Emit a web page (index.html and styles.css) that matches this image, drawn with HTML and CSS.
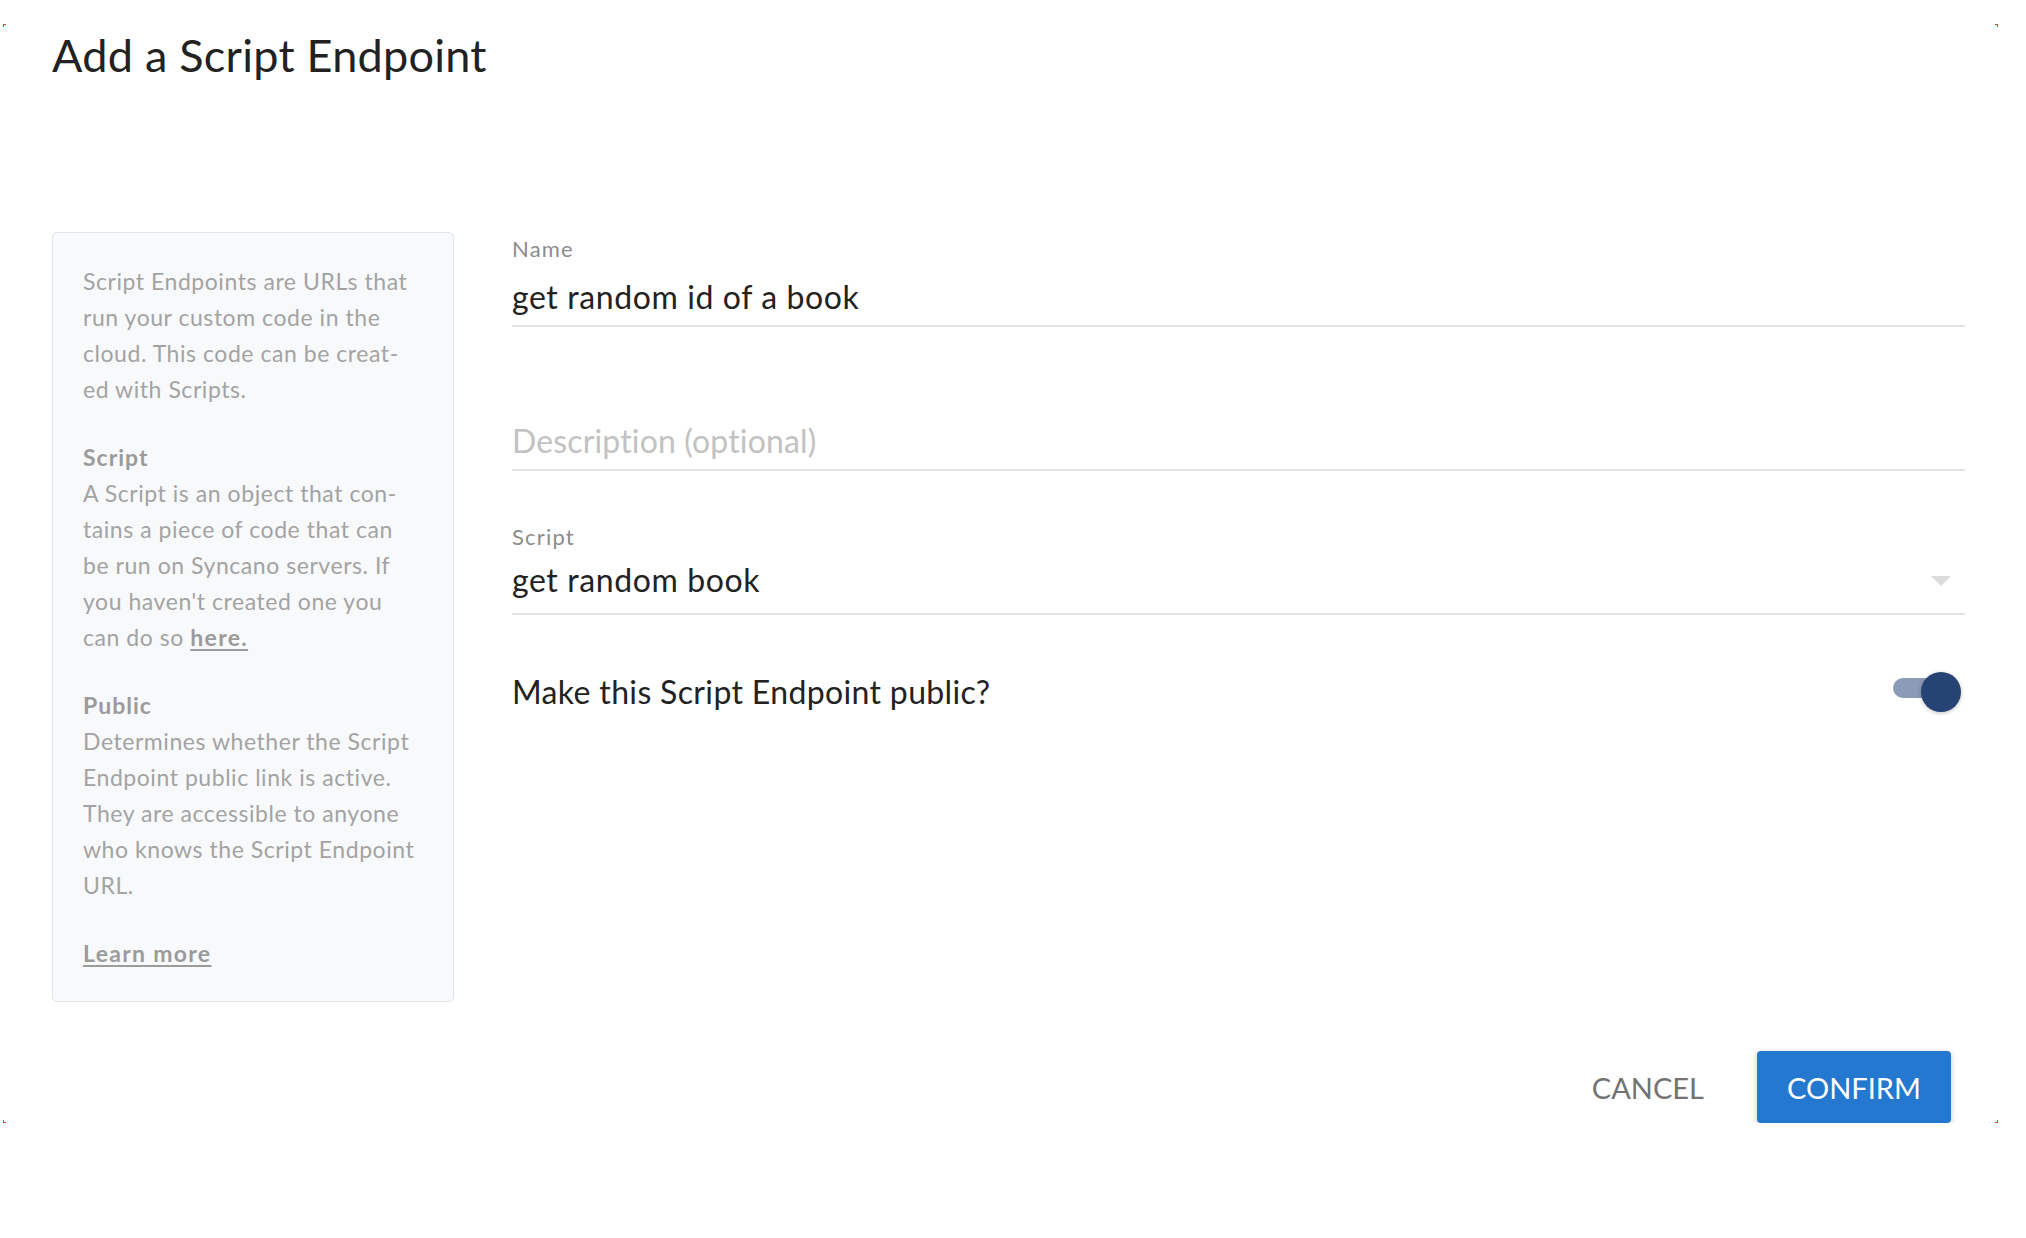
FILE: index.html
```html
<!DOCTYPE html>
<html lang="en">
<head>
<meta charset="utf-8">
<title>Add a Script Endpoint</title>
<link rel="stylesheet" href="styles.css">
</head>
<body>
<div class="dialog">
  <span class="mark mark-tl"></span>
  <span class="mark mark-tr"></span>
  <span class="mark mark-bl"></span>
  <span class="mark mark-br"></span>

  <h1 class="title">Add a Script Endpoint</h1>

  <div class="content">
    <aside class="help">
      <p class="help-p">Script Endpoints are URLs that<br>run your custom code in the<br>cloud. This code can be creat-<br>ed with Scripts.</p>
      <p class="help-p"><strong class="help-h">Script</strong><br>A Script is an object that con-<br>tains a piece of code that can<br>be run on Syncano servers. If<br>you haven't created one you<br>can do so <a class="help-link" href="#">here.</a></p>
      <p class="help-p"><strong class="help-h">Public</strong><br>Determines whether the Script<br>Endpoint public link is active.<br>They are accessible to anyone<br>who knows the Script Endpoint<br>URL.</p>
      <p class="help-p"><a class="help-link" href="#">Learn more</a></p>
    </aside>

    <form class="form">
      <div class="field">
        <div class="field-label">Name</div>
        <div class="field-input">get random id of a book</div>
      </div>
      <div class="field">
        <div class="field-label"></div>
        <div class="field-input placeholder">Description (optional)</div>
      </div>
      <div class="field field-select">
        <div class="field-label">Script</div>
        <div class="field-input select-input">
          <span>get random book</span>
          <span class="caret"></span>
        </div>
      </div>
      <div class="toggle-row">
        <div class="toggle-label">Make this Script Endpoint public?</div>
        <div class="toggle">
          <span class="toggle-track"></span>
          <span class="toggle-knob"></span>
        </div>
      </div>
    </form>
  </div>

  <div class="actions">
    <button class="btn btn-cancel" type="button">CANCEL</button>
    <button class="btn btn-confirm" type="button">CONFIRM</button>
  </div>
</div>
</body>
</html>
```

FILE: styles.css
```css
* { box-sizing: border-box; }

html, body {
  margin: 0;
  padding: 0;
  background: #ffffff;
}

body {
  font-family: "Lato", "Open Sans", "Liberation Sans", sans-serif;
  color: #222222;
}

.dialog {
  position: relative;
  margin: 24px 0 0 3px;
  width: 1995px;
  height: 1099px;
  padding: 4px 33px 0 49px;
}

.mark {
  position: absolute;
  width: 3px;
  height: 3px;
}
.mark-tl { left: 0; top: 0; border-left: 1px solid #f03a3a; border-top: 1px solid #f03a3a; }
.mark-tr { right: 0; top: 0; border-right: 1px solid #f03a3a; border-top: 1px solid #f03a3a; }
.mark-bl { left: 0; bottom: 0; border-left: 1px solid #f03a3a; border-bottom: 1px solid #f03a3a; }
.mark-br { right: 0; bottom: 0; border-right: 1px solid #f03a3a; border-bottom: 1px solid #f03a3a; }

.title {
  margin: 0;
  font-size: 45px;
  line-height: 54px;
  font-weight: 400;
  letter-spacing: 0.25px;
  color: #222222;
}

.content {
  display: flex;
  align-items: flex-start;
  gap: 58px;
  margin-top: 150px;
}

.help {
  flex: 0 0 402px;
  width: 402px;
  background: #f8f9fb;
  border: 1px solid #e1e4e8;
  border-radius: 5px;
  padding: 30px;
  font-size: 23px;
  line-height: 36px;
  letter-spacing: 0.55px;
  color: #a3a3a3;
}

.help-p {
  margin: 0 0 32px 0;
  white-space: nowrap;
}
.help-p:last-child { margin-bottom: 0; }

.help-h {
  font-weight: 700;
  letter-spacing: 1px;
  color: #9b9b9b;
}

.help-link {
  font-weight: 700;
  letter-spacing: 1.3px;
  color: #9b9b9b;
  text-decoration: underline;
  text-underline-offset: 3px;
}

.form {
  flex: 1 1 auto;
  display: flex;
  flex-direction: column;
}

.field {
  margin-bottom: 49px;
}

.field-label {
  height: 33px;
  font-size: 22px;
  line-height: 33px;
  letter-spacing: 1.2px;
  color: #8c8c8c;
}

.field-input {
  margin-top: 8px;
  padding-bottom: 4px;
  border-bottom: 2px solid #e2e2e2;
  font-size: 32px;
  line-height: 48px;
  height: 54px;
  letter-spacing: 0.6px;
  color: #222222;
}

.placeholder {
  letter-spacing: 0.15px;
  color: #c2c2c2;
}

.select-input {
  display: flex;
  align-items: center;
  justify-content: space-between;
  margin-top: 3px;
  padding-bottom: 9px;
  padding-right: 14px;
  height: 59px;
}

.caret {
  width: 0;
  height: 0;
  border-left: 10px solid transparent;
  border-right: 10px solid transparent;
  border-top: 10px solid #dcdcdc;
  margin-top: 2px;
}

.toggle-row {
  display: flex;
  align-items: center;
  justify-content: space-between;
  margin-top: 8px;
}

.toggle-label {
  font-size: 32px;
  line-height: 40px;
  letter-spacing: 0.35px;
  color: #222222;
}

.toggle {
  position: relative;
  width: 68px;
  height: 40px;
  margin-right: 4px;
}

.toggle-track {
  position: absolute;
  left: 0;
  top: 6px;
  width: 56px;
  height: 20px;
  border-radius: 10px;
  background: #8c9bb6;
}

.toggle-knob {
  position: absolute;
  right: 0;
  top: 0;
  width: 40px;
  height: 40px;
  border-radius: 50%;
  background: #254373;
  box-shadow: 0 1px 4px rgba(0, 0, 0, 0.25);
}

.actions {
  display: flex;
  justify-content: flex-end;
  gap: 21px;
  margin-top: 49px;
  padding-right: 14px;
}

.btn {
  height: 72px;
  padding: 0 32px;
  border: none;
  border-radius: 4px;
  font-family: "Lato", "Open Sans", "Liberation Sans", sans-serif;
  font-size: 29px;
  font-weight: 400;
  cursor: pointer;
}

.btn-cancel {
  background: transparent;
  color: #737373;
}

.btn-confirm {
  background: #2478d0;
  color: #ffffff;
  width: 194px;
  padding: 0;
  box-shadow: 0 2px 6px rgba(0, 0, 0, 0.22);
}
```
